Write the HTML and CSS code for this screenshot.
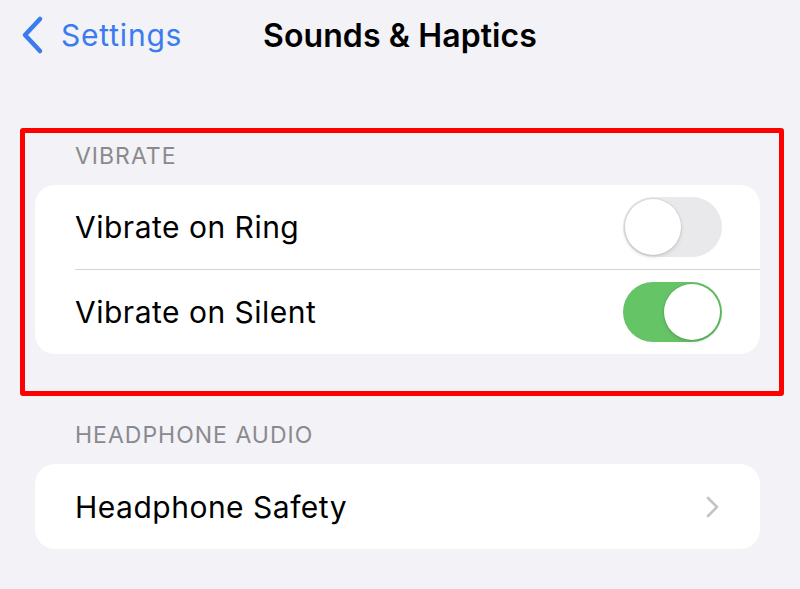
FILE: index.html
```html
<!DOCTYPE html>
<html lang="en">
<head>
<meta charset="utf-8">
<title>Sounds &amp; Haptics</title>
<link rel="stylesheet" href="styles.css">
</head>
<body>
<div class="screen">
  <header class="nav">
    <a class="back" href="#">
      <svg class="back-icon" width="24" height="40" viewBox="0 0 24 40" aria-hidden="true">
        <polyline points="19,4 4,20 19,36" fill="none" stroke="currentColor" stroke-width="4.5" stroke-linecap="round" stroke-linejoin="round"/>
      </svg>
      <span>Settings</span>
    </a>
    <h1 class="title">Sounds &amp; Haptics</h1>
    <div></div>
  </header>

  <section class="group highlighted">
    <h2 class="group-header">VIBRATE</h2>
    <div class="card">
      <div class="row">
        <span class="label">Vibrate on Ring</span>
        <span class="toggle"><span class="knob"></span></span>
      </div>
      <div class="row">
        <span class="label">Vibrate on Silent</span>
        <span class="toggle on"><span class="knob"></span></span>
      </div>
    </div>
  </section>

  <section class="group">
    <h2 class="group-header">HEADPHONE AUDIO</h2>
    <div class="card">
      <div class="row">
        <span class="label">Headphone Safety</span>
        <svg class="disclosure" width="16" height="24" viewBox="0 0 16 24" aria-hidden="true">
          <polyline points="4,3 13,12 4,21" fill="none" stroke="currentColor" stroke-width="2.6" stroke-linecap="round" stroke-linejoin="round"/>
        </svg>
      </div>
    </div>
  </section>
</div>
</body>
</html>
```

FILE: styles.css
```css
* {
  box-sizing: border-box;
}

html, body {
  margin: 0;
  padding: 0;
}

body {
  background: #f2f2f7;
  font-family: Inter, "Noto Sans", sans-serif;
  color: #000;
  width: 800px;
  height: 589px;
  overflow: hidden;
}

.screen {
  display: flex;
  flex-direction: column;
}

/* navigation bar */
.nav {
  height: 70px;
  display: grid;
  grid-template-columns: 1fr auto 1fr;
  align-items: center;
}

.back {
  display: flex;
  align-items: center;
  gap: 16px;
  padding-left: 21px;
  color: #3a7cf0;
  text-decoration: none;
  font-size: 30px;
  letter-spacing: 0.8px;
}

.back-icon {
  display: block;
}

.title {
  margin: 0;
  font-size: 32px;
  font-weight: 600;
  letter-spacing: 0.1px;
}

/* grouped sections */
.group {
  display: flex;
  flex-direction: column;
  padding: 0 40px 0 35px;
  margin-top: 26px;
}

.group.highlighted {
  margin: 58px 16px 0 20px;
  padding: 10px 19px 37px 10px;
  border: 5px solid #ff0000;
  border-radius: 3px;
}

.group-header {
  margin: 0 0 16px 40px;
  font-size: 23px;
  line-height: 26px;
  font-weight: 400;
  letter-spacing: 1px;
  color: #8a8a8e;
}

.card {
  background: #fff;
  border-radius: 20px;
  overflow: hidden;
}

.row {
  height: 84px;
  display: flex;
  align-items: center;
  justify-content: space-between;
  padding: 0 38px 0 40px;
}

.row + .row {
  height: 85px;
  border-top: 1px solid #d4d4d6;
  margin-left: 40px;
  padding-left: 0;
}

.group:not(.highlighted) .row {
  height: 85px;
}

.label {
  font-size: 30px;
  letter-spacing: 0.5px;
}

/* switch */
.toggle {
  width: 99px;
  height: 60px;
  border-radius: 30px;
  background: #e9e9eb;
  padding: 2px;
  display: flex;
  justify-content: flex-start;
}

.toggle.on {
  background: #65c466;
  justify-content: flex-end;
}

.knob {
  width: 56px;
  height: 56px;
  border-radius: 50%;
  background: #fff;
  box-shadow: 0 0 0 1px rgba(0, 0, 0, 0.06), 0 2px 4px rgba(0, 0, 0, 0.12);
}

.disclosure {
  color: #c4c4c7;
  margin-right: 2px;
  display: block;
}
```
